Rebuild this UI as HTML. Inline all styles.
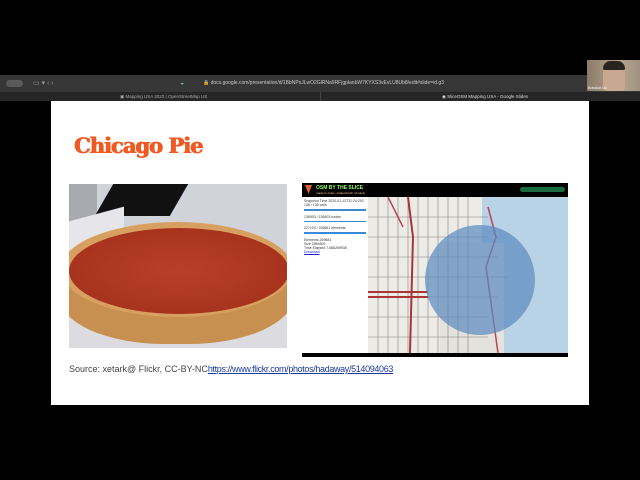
<!DOCTYPE html>
<html><head><style>
*{margin:0;padding:0;box-sizing:border-box}
body{width:640px;height:480px;background:#000;position:relative;overflow:hidden;font-family:"Liberation Sans",sans-serif}
.abs{position:absolute}
</style></head><body>
<div class="abs" style="left:0;top:75px;width:640px;height:17px;background:#363636"></div>
<div class="abs" style="left:6px;top:80px;width:17px;height:7px;border-radius:4px;background:#5a5a5a"></div>
<div class="abs" style="left:33px;top:79px;font-size:7px;color:#999">▭ ▾ ‹ ›</div>
<div class="abs" style="left:180px;top:80px;font-size:7px;color:#7aa">◒</div>
<div class="abs" style="left:203px;top:80px;font-size:5px;color:#ccc;white-space:nowrap">🔒 docs.google.com/presentation/d/1BbNPsJLwO2GlRNa9RFjgplanbW7KYXS3vEvLU8Ub8/edit#slide=id.g3</div>
<div class="abs" style="left:0;top:92px;width:640px;height:9px;background:#262626"></div>
<div class="abs" style="left:320px;top:92px;width:1px;height:9px;background:#444"></div>
<div class="abs" style="left:120px;top:94px;font-size:4.5px;color:#aaa;white-space:nowrap">▣ Mapping USA 2023 | OpenStreetMap US</div>
<div class="abs" style="left:442px;top:94px;font-size:4.5px;color:#ddd;white-space:nowrap">◉ SliceOSM Mapping USA - Google Slides</div>
<div class="abs" style="left:587px;top:60px;width:53px;height:31px;background:linear-gradient(90deg,#8a7a68,#b8a890 60%,#a09080)"></div>
<div class="abs" style="left:603px;top:62px;width:22px;height:29px;border-radius:10px 10px 4px 4px;background:#c8a890"></div>
<div class="abs" style="left:603px;top:61px;width:22px;height:9px;border-radius:10px 10px 2px 2px;background:#2a2420"></div>
<div class="abs" style="left:588px;top:86px;font-size:3.5px;color:#fff">Brandon Liu</div>

<div class="abs" style="left:51px;top:101px;width:538px;height:304px;background:#fff"></div>
<div class="abs" style="left:74px;top:133px;font-family:'DejaVu Serif',serif;font-weight:bold;font-size:21px;color:#f05a22;letter-spacing:-1px;white-space:nowrap;text-shadow:0.6px 0 0 #f05a22,-0.3px 0 0 #f05a22">Chicago Pie</div>

<div class="abs" style="left:69px;top:184px;width:218px;height:164px;overflow:hidden;background:#d0d3da">
 <div class="abs" style="left:0;top:0;width:28px;height:40px;background:#a8aab0"></div>
 <div class="abs" style="left:35px;top:0;width:75px;height:32px;background:#111;transform:skewX(-30deg)"></div>
 <div class="abs" style="left:0;top:30px;width:55px;height:40px;background:#e6e6ea;transform:skewY(-15deg)"></div>
 <div class="abs" style="left:-15px;top:120px;width:240px;height:50px;background:#dcdce0"></div>
 <div class="abs" style="left:-10px;top:40px;width:235px;height:120px;border-radius:45%/40%;background:#c89050"></div>
 <div class="abs" style="left:-8px;top:38px;width:232px;height:95px;border-radius:50%;background:#d8a060"></div>
 <div class="abs" style="left:0px;top:44px;width:220px;height:86px;border-radius:50%;background:radial-gradient(ellipse,#b8402a,#a8341e 70%,#9c2c1a)"></div>
</div>

<div class="abs" style="left:302px;top:183px;width:266px;height:174px;overflow:hidden;background:#ecebe6">
 <div class="abs" style="left:0;top:0;width:266px;height:14px;background:#000"></div>
 <div class="abs" style="left:3px;top:2px;width:7px;height:9px;background:#e06030;clip-path:polygon(0 0,100% 0,50% 100%)"></div>
 <div class="abs" style="left:14px;top:2px;font-size:5px;font-weight:bold;color:#9f6">OSM BY THE SLICE</div>
 <div class="abs" style="left:14px;top:8px;font-size:3px;color:#fc8">made to order • baked fresh minutely</div>
 <div class="abs" style="left:218px;top:4px;width:45px;height:5px;border-radius:3px;background:#1a6a40"></div>
 <div class="abs" style="left:0;top:14px;width:66px;height:156px;background:#fff;font-size:3.5px;color:#333;padding:2px 2px">
  Snapshot Time 2020-01-12T11:24:292<br>136 / 136 cells
  <div style="height:1.5px;background:#3a8ad8;margin:2px 0 4px"></div>136903 / 136903 nodes
  <div style="height:1.5px;background:#3a8ad8;margin:2px 0 4px"></div>227103 / 226661 elements
  <div style="height:1.5px;background:#3a8ad8;margin:2px 0 4px"></div>Elements 259681<br>Size 2854692<br>Time Elapsed 7.686269938<br><span style="color:#22c;text-decoration:underline">Download</span>
 </div>
 <div class="abs" style="left:180px;top:14px;width:86px;height:156px;background:#b8d2e6"></div>
 <div class="abs" style="left:138px;top:60px;width:64px;height:156px;background:#e4e2dc"></div>
 <svg class="abs" style="left:66px;top:14px" width="200" height="156">
  <g stroke="#555" stroke-width="0.6" opacity=".7">
   <path d="M0 20H120M0 40H120M0 60H130M0 80H140M0 100H130M0 120H120M0 140H120M20 0V156M40 0V156M60 0V156M80 0V156M100 0V156M10 0V156M30 0V156M50 0V156M70 0V156M90 0V156"/>
  </g>
  <path d="M0 95H60M0 100H60" stroke="#a33" stroke-width="2"/>
  <path d="M40 0L45 40L42 156" stroke="#a33" stroke-width="2" fill="none"/>
  <path d="M20 0L35 30M120 10L128 40L118 70L130 156" stroke="#b45" stroke-width="1.5" fill="none"/>
  <circle cx="112" cy="83" r="55" fill="#5a8abf" opacity=".7"/>
 </svg>
 <div class="abs" style="left:0;top:170px;width:266px;height:4px;background:#000"></div>
</div>

<div class="abs" style="left:69px;top:364px;font-size:9px;color:#444;white-space:nowrap">Source: xetark@ Flickr, CC-BY-NC<span style="color:#1a3a9a;text-decoration:underline;letter-spacing:-0.35px">https://www.flickr.com/photos/hadaway/514094063</span></div>
</body></html>
